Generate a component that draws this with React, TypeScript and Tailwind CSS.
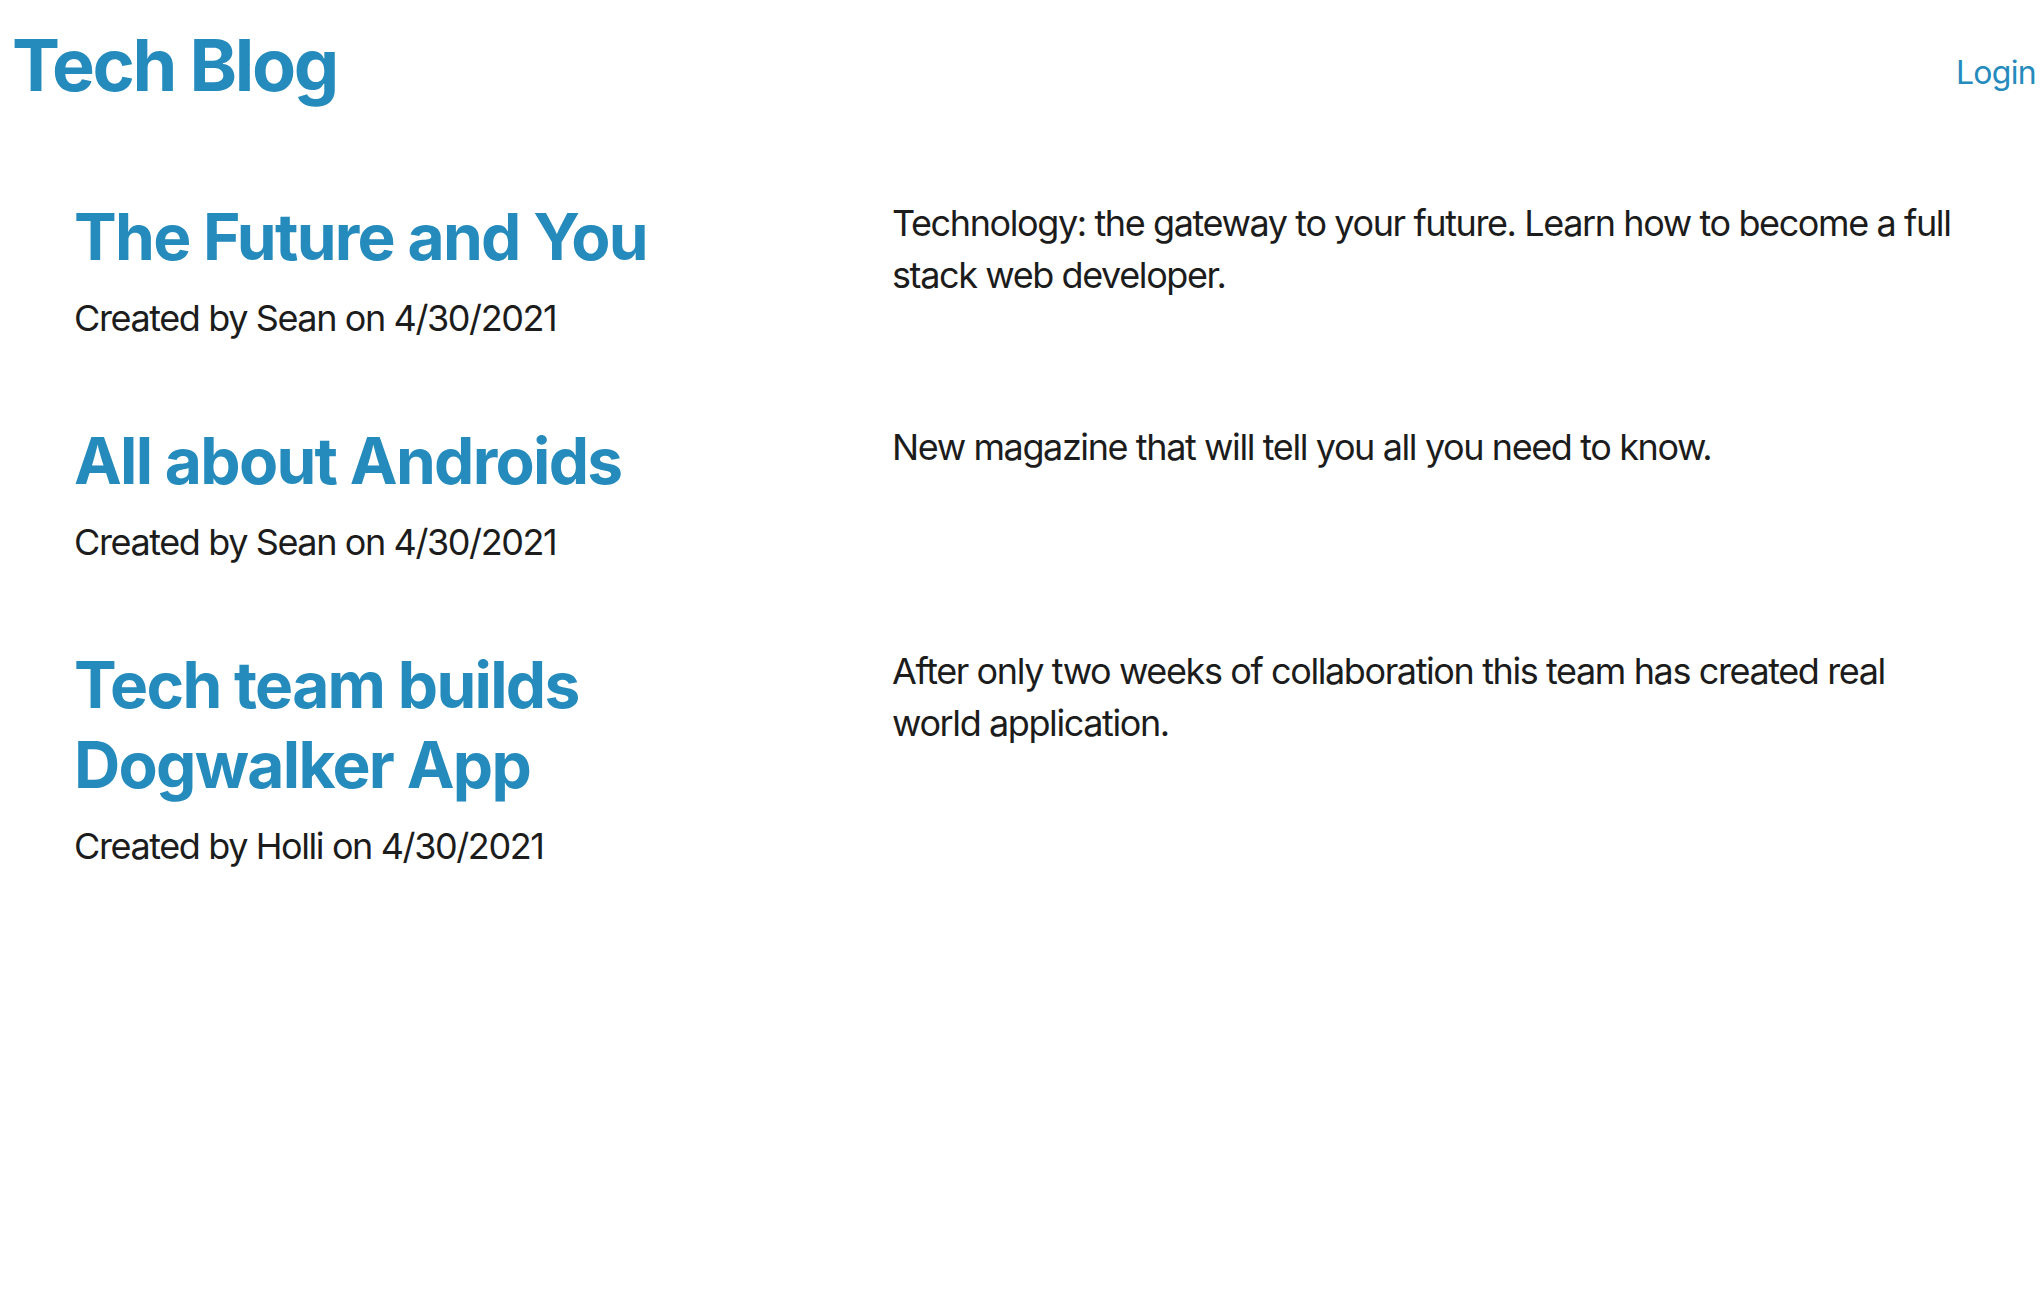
import React from "react";

const posts = [
  {
    title: "The Future and You",
    author: "Sean",
    date: "4/30/2021",
    body: "Technology: the gateway to your future. Learn how to become a full stack web developer.",
  },
  {
    title: "All about Androids",
    author: "Sean",
    date: "4/30/2021",
    body: "New magazine that will tell you all you need to know.",
  },
  {
    title: "Tech team builds Dogwalker App",
    author: "Holli",
    date: "4/30/2021",
    body: "After only two weeks of collaboration this team has created real world application.",
  },
];

export default function App() {
  return (
    <div
      className="min-h-[1290px] w-full bg-white"
      style={{ fontFamily: "Inter, 'Noto Sans', sans-serif" }}
    >
      <header className="flex items-start justify-between pl-[12px] pr-[8px] pt-[29px]">
        <h1 className="text-[72px] font-bold leading-[1] tracking-[-2.4px] text-[#258bbd]">
          Tech Blog
        </h1>
        <a className="mt-[28px] text-[32px] leading-[1] tracking-[-0.7px] text-[#258bbd]" href="#">
          Login
        </a>
      </header>
      <main className="mt-[96px] flex flex-col gap-[76px] pl-[74px]">
        {posts.map((p) => (
          <article key={p.title} className="flex">
            <div className="w-[818px] shrink-0 pr-[120px]">
              <h2 className="text-[64px] font-bold leading-[80px] tracking-[-1.7px] text-[#258bbd]">
                {p.title}
              </h2>
              <p className="mt-[14px] text-[36px] leading-[54px] tracking-[-1.4px] text-[#1c1c1c]">
                Created by {p.author} on {p.date}
              </p>
            </div>
            <div className="w-[1075px]">
              <p className="text-[36px] leading-[52px] tracking-[-1.4px] text-[#1c1c1c]">{p.body}</p>
            </div>
          </article>
        ))}
      </main>
    </div>
  );
}
